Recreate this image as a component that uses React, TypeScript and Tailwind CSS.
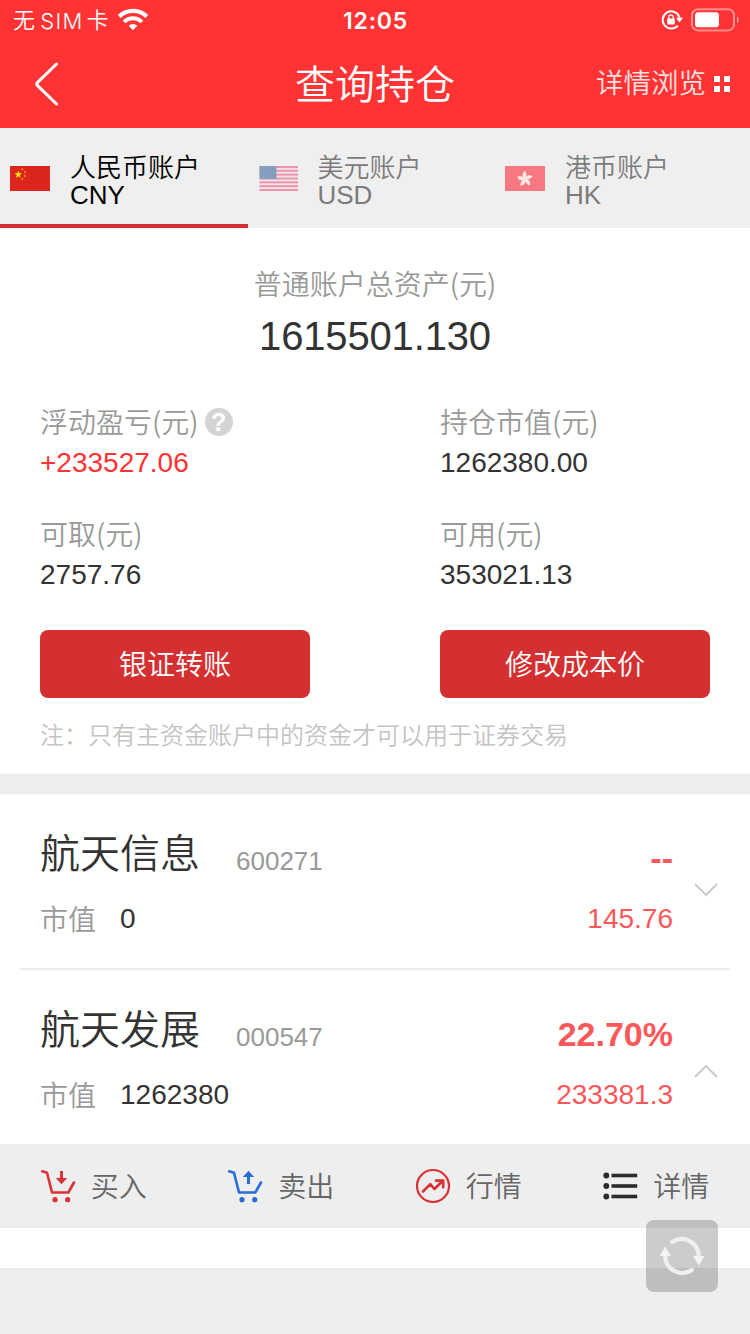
import clsx from "clsx";

const accounts = [
  { name: "人民币账户", code: "CNY", flag: <FlagCN />, active: true },
  { name: "美元账户", code: "USD", flag: <FlagUS />, active: false },
  { name: "港币账户", code: "HK", flag: <FlagHK />, active: false },
];

const stats = [
  { label: "浮动盈亏(元)", value: "+233527.06", up: true, help: true },
  { label: "持仓市值(元)", value: "1262380.00" },
  { label: "可取(元)", value: "2757.76" },
  { label: "可用(元)", value: "353021.13" },
];

const positions = [
  {
    name: "航天信息",
    code: "600271",
    value: "0",
    percent: "--",
    profit: "145.76",
    open: false,
  },
  {
    name: "航天发展",
    code: "000547",
    value: "1262380",
    percent: "22.70%",
    profit: "233381.3",
    open: true,
  },
];

const actions = [
  { name: "买入", icon: <Cart color="#dc3135" down /> },
  { name: "卖出", icon: <Cart color="#2a6cd6" /> },
  { name: "行情", icon: <Trend /> },
  { name: "详情", icon: <List /> },
];

const cjk = "font-['Noto_Sans_CJK_SC',sans-serif] font-[350]";

function FlagCN() {
  return (
    <svg className="mt-1" width="40" height="25" viewBox="0 0 40 25">
      <rect width="40" height="25" fill="#dc251c" />
      <polygon
        points="8.3,5.2 9,7.5 11.4,7.5 9.5,9 10.2,11.3 8.3,9.9 6.4,11.3 7.1,9 5.2,7.5 7.6,7.5"
        fill="#ffea00"
        stroke="#ffea00"
        strokeWidth="0.6"
      />
      <g fill="#f5a916">
        <circle cx="12.4" cy="3.2" r="0.9" />
        <circle cx="14.8" cy="6" r="0.9" />
        <circle cx="14.8" cy="10" r="0.9" />
        <circle cx="12.4" cy="12.8" r="0.9" />
      </g>
    </svg>
  );
}

function FlagUS() {
  return (
    <svg className="mt-1" width="40" height="25" viewBox="0 0 40 25">
      <rect x="1.5" width="38.5" height="25" fill="#f6e4ea" />
      {[0, 1, 2, 3, 4, 5, 6].map((i) => (
        <rect
          key={i}
          x="1.5"
          y={i * 3.84}
          width="38.5"
          height="1.95"
          fill="#e996ad"
        />
      ))}
      <rect x="1.5" width="17" height="13" fill="#829bbd" />
      {[0, 1, 2, 3, 4].map((i) => (
        <line
          key={i}
          x1="2.5"
          x2="18"
          y1={1.5 + i * 2.5}
          y2={1.5 + i * 2.5}
          stroke="#9db1cc"
          strokeWidth="0.8"
          strokeDasharray="1 1.5"
        />
      ))}
    </svg>
  );
}

function FlagHK() {
  return (
    <svg className="mt-1" width="40" height="25" viewBox="0 0 40 25">
      <rect width="40" height="25" fill="#f9787f" />
      {[0, 72, 144, 216, 288].map((deg) => (
        <path
          key={deg}
          d="M20 13 C16.6 10.5 16.8 6 20.6 5 C19.8 7 23.4 8.6 20 13 Z"
          fill="#fff"
          fillOpacity="0.85"
          transform={`rotate(${deg} 20 13)`}
        />
      ))}
    </svg>
  );
}

function Cart({ color, down }: { color: string; down?: boolean }) {
  return (
    <svg width="36" height="36" viewBox="0 0 36 36" fill="none">
      <path
        d="M2.2 3.3 L7 4.8 L12 24.5 H28.3 L34 14.5"
        stroke={color}
        strokeWidth="2.6"
        strokeLinecap="round"
        strokeLinejoin="round"
      />
      <circle cx="15" cy="31.7" r="2.6" fill={color} />
      <circle cx="27.7" cy="31.7" r="2.6" fill={color} />
      {down ? (
        <path d="M20 3 h3 v7 h4.2 L21.5 16.2 L15.8 10 H20 Z" fill={color} />
      ) : (
        <path d="M20 16 h3 V9 h4.2 L21.5 2.8 L15.8 9 H20 Z" fill={color} />
      )}
    </svg>
  );
}

function Trend() {
  return (
    <svg width="36" height="36" viewBox="0 0 36 36" fill="none" stroke="#d93033">
      <circle cx="18" cy="18" r="16" strokeWidth="2.2" />
      <path
        d="M8 23.5 L15.3 16.2 L19.4 21 L28 12.5 M21 12.6 H28.2 V19.2"
        strokeWidth="2.6"
        strokeLinecap="round"
        strokeLinejoin="round"
      />
    </svg>
  );
}

function List() {
  return (
    <svg width="36" height="36" viewBox="0 0 36 36" fill="#2b2b2b">
      {[7.5, 18, 28.5].map((y) => (
        <g key={y}>
          <circle cx="4.3" cy={y} r="2.9" />
          <rect x="9.5" y={y - 1.8} width="25.7" height="3.6" />
        </g>
      ))}
    </svg>
  );
}

function StatusBar() {
  return (
    <div className="flex h-10 items-center justify-between pr-3 pl-[13px] text-[22px] leading-10 text-white">
      <div className="flex w-[300px] items-center font-['Inter','Noto_Sans_CJK_SC',sans-serif] font-[350]">
        <span className="tracking-[1.3px]">无</span>
        <span className="ml-1 pt-px tracking-[1.2px]">SIM</span>
        <span className="ml-[3px]">卡</span>
        <svg className="ml-[9px]" width="32" height="24" viewBox="0 0 32 24" fill="none" stroke="#fff">
          <path d="M2.2 8.6 A19.6 19.6 0 0 1 29.8 8.6" strokeWidth="4.2" />
          <path d="M7.1 13.9 A12.5 12.5 0 0 1 24.9 13.9" strokeWidth="4" />
          <path
            d="M11.6 17.7 A6.3 6.3 0 0 1 20.4 17.7 L16 22.2 Z"
            fill="#fff"
            stroke="none"
          />
        </svg>
      </div>
      <p className="pt-px font-['Inter',sans-serif] text-[23px] font-semibold tracking-[0.8px]">
        12:05
      </p>
      <div className="flex w-[300px] items-center justify-end gap-2">
        <svg width="22" height="22" viewBox="0 0 22 22" fill="none">
          <path
            d="M16.2 17.2 A8.6 8.6 0 1 1 18.3 7.8"
            stroke="#fff"
            strokeWidth="2"
            strokeLinecap="round"
          />
          <path d="M15 8.8 H22 L18.5 13.6 Z" fill="#fff" />
          <rect x="6.2" y="9.6" width="7.6" height="5.8" rx="0.8" fill="#fff" />
          <path
            d="M7.8 10 V8.1 a2.2 2.2 0 0 1 4.4 0 V10"
            stroke="#fff"
            strokeWidth="1.3"
          />
        </svg>
        <svg className="-mr-[1px]" width="48" height="24" viewBox="0 0 48 24" fill="none">
          <rect
            x="1"
            y="1.2"
            width="42"
            height="21.2"
            rx="6"
            stroke="#fff"
            strokeOpacity="0.45"
            strokeWidth="2"
          />
          <rect x="4" y="4.3" width="24" height="15" rx="3.4" fill="#fff" />
          <path
            d="M46 8.2 C48.4 9.2 48.4 14.4 46 15.4 Z"
            fill="#fff"
            fillOpacity="0.5"
          />
        </svg>
      </div>
    </div>
  );
}

function Chevron({ up }: { up: boolean }) {
  return (
    <svg
      className={clsx("ml-5", up && "rotate-180")}
      width="26"
      height="16"
      viewBox="0 0 26 16"
      fill="none"
    >
      <path d="M2 2 L13 13 L24 2" stroke="#c8c8c8" strokeWidth="1.8" />
    </svg>
  );
}

export default function App() {
  return (
    <div className="relative flex h-[1334px] w-[750px] flex-col overflow-hidden bg-[#eee] font-['Liberation_Sans','Noto_Sans_CJK_SC',sans-serif] text-[#333]">
      <header className="h-32 shrink-0 bg-[#ff3333] text-white">
        <StatusBar />
        <div
          className={clsx(
            "flex h-[88px] items-center justify-between pr-[19px] pl-[34px]",
            cjk
          )}
        >
          <div className="w-[221px]">
            <svg width="26" height="44" viewBox="0 0 26 44" fill="none">
              <path
                d="M22.5 2 L3.6 20.4 Q2 22 3.6 23.6 L22.5 42"
                stroke="#fff"
                strokeWidth="3"
                strokeLinecap="round"
              />
            </svg>
          </div>
          <p className="pb-[5px] text-[40px] leading-[80px]">查询持仓</p>
          <div className="flex w-[236px] items-center justify-end gap-2 text-[27.5px] text-white/85">
            <span className="pb-1">详情浏览</span>
            <div className="mr-px grid grid-cols-2 gap-1">
              <span className="h-[6px] w-[6px] bg-white" />
              <span className="h-[6px] w-[6px] bg-white" />
              <span className="h-[6px] w-[6px] bg-white" />
              <span className="h-[6px] w-[6px] bg-white" />
            </div>
          </div>
        </div>
      </header>

      <nav className="flex h-[100px] shrink-0 bg-[#efefef]">
        {accounts.map((item) => (
          <div
            key={item.code}
            className={clsx(
              "flex w-[247.5px] items-center gap-5 border-b-4 pl-[10px] text-[26px]",
              item.active
                ? "border-[#d43031] text-black"
                : "border-transparent text-[#7b7b7b]"
            )}
          >
            {item.flag}
            <div className="pt-[10px]">
              <p className="leading-7 font-[350]">{item.name}</p>
              <p className="leading-[26px]">{item.code}</p>
            </div>
          </div>
        ))}
      </nav>

      <section className="h-[546px] shrink-0 bg-white px-10 pt-[35px]">
        <p className={clsx("text-center text-[28px] leading-10 text-[#999]", cjk)}>
          普通账户总资产(元)
        </p>
        <p className="pt-[5px] text-center text-[40px] leading-[56px] tracking-[-0.15px]">
          1615501.130
        </p>
        <div className="grid grid-cols-2 gap-x-[130px] gap-y-7 pt-[38px] text-[28px]">
          {stats.map((item) => (
            <div key={item.label}>
              <div
                className={clsx(
                  "flex h-[38px] items-center gap-[6px] leading-[38px] whitespace-nowrap text-[#999]",
                  cjk
                )}
              >
                <span>{item.label}</span>
                {item.help && (
                  <span className="mt-[2px] flex h-7 w-7 items-center justify-center rounded-full bg-[#d4d4d4] font-['Liberation_Sans',sans-serif] text-[25px] leading-7 font-bold text-white">
                    ?
                  </span>
                )}
              </div>
              <p className={clsx("leading-[46px]", item.up && "text-[#ff3333]")}>
                {item.value}
              </p>
            </div>
          ))}
        </div>
        <div className="flex justify-between pt-8 text-[28px] text-white">
          <button
            className={clsx("h-[68px] w-[270px] rounded-lg bg-[#d43031] pb-[2px]", cjk)}
          >
            银证转账
          </button>
          <button
            className={clsx("h-[68px] w-[270px] rounded-lg bg-[#d43031] pb-[2px]", cjk)}
          >
            修改成本价
          </button>
        </div>
        <p className={clsx("pt-5 text-[24px] leading-8 text-[#c3c3c3]", cjk)}>
          注：只有主资金账户中的资金才可以用于证券交易
        </p>
      </section>

      <section className="mt-5 h-[350px] shrink-0 bg-white">
        {positions.map((item, index) => (
          <div
            key={item.code}
            className={clsx(
              "mx-5 flex items-center pr-[11px] pl-5",
              index === 0 ? "h-44 border-b-2 border-[#eee]" : "h-[174px]"
            )}
          >
            <div className="flex-1">
              <div className="flex h-14 items-center gap-9">
                <span className={clsx("text-[40px] leading-[56px]", cjk)}>
                  {item.name}
                </span>
                <span className="pt-5 text-[26px] leading-none text-[#999]">
                  {item.code}
                </span>
              </div>
              <div className="flex gap-6 pt-[19px] text-[28px] leading-[42px]">
                <span className={clsx("leading-10 text-[#999]", cjk)}>市值</span>
                <span>{item.value}</span>
              </div>
            </div>
            <div className="text-right text-[#fb585b]">
              <p className="text-[34px] leading-[70px] font-bold">
                {item.percent}
              </p>
              <p className="pt-[6px] text-[28px] leading-10">{item.profit}</p>
            </div>
            <div className={item.open ? "pt-7" : "pt-[18px]"}>
              <Chevron up={item.open} />
            </div>
          </div>
        ))}
      </section>

      <div className="grid h-[84px] shrink-0 grid-cols-4 text-[28px] text-[#666]">
        {actions.map((item) => (
          <div
            key={item.name}
            className="flex items-center justify-center gap-[15px] pr-px"
          >
            {item.icon}
            <span className={clsx("pb-[2px]", cjk)}>{item.name}</span>
          </div>
        ))}
      </div>
      <div className="h-10 shrink-0 bg-white" />

      <button className="absolute right-8 bottom-[42px] flex h-[72px] w-[72px] items-center justify-center rounded-lg bg-black/20">
        <svg width="46" height="40" viewBox="0 0 46 40" fill="none">
          <g stroke="#f0f0f0" strokeWidth="4.3" strokeLinecap="round">
            <path d="M13.2 6.1 A17 17 0 0 1 39.8 20" />
            <path d="M32.8 33.9 A17 17 0 0 1 6.2 20" />
          </g>
          <g fill="#f3f3f3">
            <path d="M34 20 H45.5 L39.8 29.5 Z" />
            <path d="M0.5 20 H12 L6.2 10.5 Z" />
          </g>
        </svg>
      </button>
    </div>
  );
}
